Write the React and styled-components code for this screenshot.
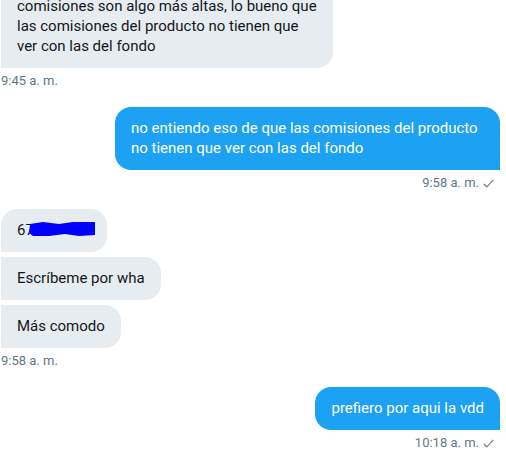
import React from "react";
import styled, { createGlobalStyle } from "styled-components";

const Global = createGlobalStyle`
  html, body { margin: 0; padding: 0; background: #ffffff; }
  body { font-family: "Segoe UI", Roboto, "Noto Sans", sans-serif; overflow: hidden; }
`;

const Thread = styled.div`
  display: flex;
  flex-direction: column;
  gap: 18px;
  padding: 0 6px 0 1px;
  margin-top: -15px;
`;

const Group = styled.div`
  display: flex;
  flex-direction: column;
  align-items: ${(p) => (p.$sent ? "flex-end" : "flex-start")};
  gap: 5px;
`;

const Bubble = styled.div`
  box-sizing: border-box;
  width: ${(p) => (p.$width ? `${p.$width}px` : "auto")};
  padding: 11px 16px 12px;
  font-size: 15px;
  line-height: 20px;
  background: ${(p) => (p.$sent ? "#1da1f2" : "#e6ecf0")};
  color: ${(p) => (p.$sent ? "#ffffff" : "#14171a")};
  border-radius: ${(p) =>
    p.$sent
      ? "16px 16px 0 16px"
      : p.$first
      ? "16px 16px 16px 0"
      : "0 16px 16px 0"};
`;

const Meta = styled.div`
  display: flex;
  align-items: center;
  gap: 4px;
  font-size: 13px;
  line-height: 16px;
  color: #657786;
  padding-right: ${(p) => (p.$sent ? "6px" : "0")};
`;

const Redaction = styled.svg`
  display: inline-block;
  vertical-align: -2px;
  margin-left: -5px;
  margin-right: -4px;
`;

const Check = () => (
  <svg width="11" height="9" viewBox="0 0 11 9">
    <path d="M0.8 5 L3.8 8 L10.3 0.8" fill="none" stroke="#657786" strokeWidth="1.1" />
  </svg>
);

export default function App() {
  return (
    <>
      <Global />
      <Thread>
        <Group>
          <Bubble $first $width={332}>
            comisiones son algo más altas, lo bueno que las comisiones del producto no tienen que ver con las del fondo
          </Bubble>
          <Meta>9:45 a. m.</Meta>
        </Group>
        <Group $sent>
          <Bubble $sent $width={385}>
            no entiendo eso de que las comisiones del producto no tienen que ver con las del fondo
          </Bubble>
          <Meta $sent>
            9:58 a. m. <Check />
          </Meta>
        </Group>
        <Group>
          <Bubble $first>
            67
            <Redaction width="66" height="16" viewBox="0 0 66 16">
              <path d="M1 3 L14 1 L30 3 L44 1 L66 1 L66 14 L50 15 L36 13 L20 15 L4 15 L0 12 Z" fill="#0000ff" />
            </Redaction>
          </Bubble>
          <Bubble>Escríbeme por wha</Bubble>
          <Bubble>Más comodo</Bubble>
          <Meta>9:58 a. m.</Meta>
        </Group>
        <Group $sent>
          <Bubble $sent>prefiero por aqui la vdd</Bubble>
          <Meta $sent>
            10:18 a. m. <Check />
          </Meta>
        </Group>
      </Thread>
    </>
  );
}
